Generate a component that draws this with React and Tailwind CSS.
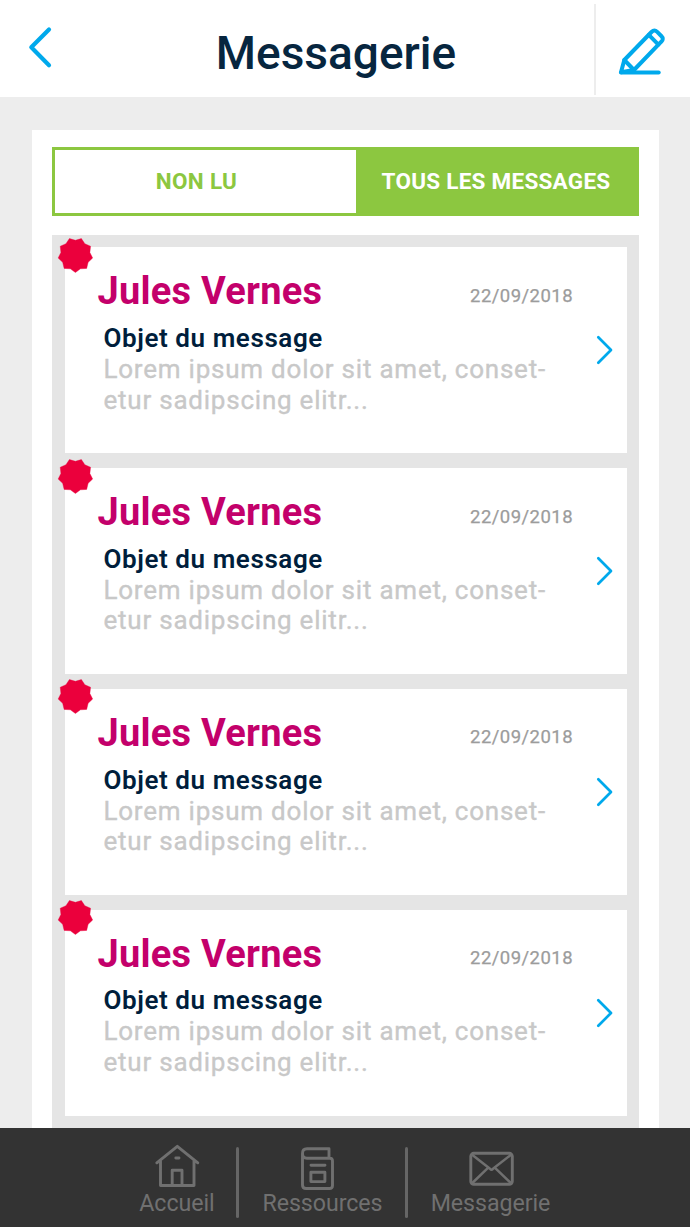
const messages = [1, 2, 3, 4].map((id) => ({
  id,
  sender: "Jules Vernes",
  date: "22/09/2018",
  subject: "Objet du message",
  lines: ["Lorem ipsum dolor sit amet, conset-", "etur sadipscing elitr..."],
}));

function Badge() {
  const points = Array.from({ length: 18 }, (_, i) => {
    const r = i % 2 === 0 ? 17.5 : 14.7;
    const a = Math.PI / 2 + (i * Math.PI) / 9;
    return `${(18.4 + r * Math.cos(a)).toFixed(2)},${(18 + r * Math.sin(a)).toFixed(2)}`;
  }).join(" ");
  return (
    <svg className="absolute -left-[7.5px] -top-[10.6px] size-9" viewBox="0 0 36 36">
      <polygon points={points} fill="#eb003c" stroke="#eb003c" strokeWidth="0.4" strokeLinejoin="round" />
    </svg>
  );
}

function MessageCard({ message }) {
  return (
    <article className="relative flex h-[206px] shrink-0 bg-white pl-[33px]">
      <Badge />
      <div className="flex-1 pt-[22px]">
        <div className="flex items-start justify-between">
          <h2 className="text-[38px] font-bold leading-[44px] tracking-[0.25px] text-[#c3006b]">{message.sender}</h2>
          <time className="mr-[20.5px] pt-[14.5px] text-[18.5px] leading-[24px] tracking-[0.45px] text-[#9c9c9c] [-webkit-text-stroke:0.25px]">{message.date}</time>
        </div>
        <h3 className="ml-[6px] mt-[9.9px] text-[26px] font-semibold leading-[30px] tracking-[0.58px] text-[#001e3c]">{message.subject}</h3>
        <p className="ml-[6px] mt-px whitespace-nowrap text-[26px] leading-[30.4px] tracking-[0.77px] text-[#c8c8c8] [-webkit-text-stroke:0.35px]">
          {message.lines[0]}
          <br />
          {message.lines[1]}
        </p>
      </div>
      <svg className="mr-[13px] mt-[88px] h-[30px] w-[20px]" viewBox="0 0 20 30" fill="none" stroke="#00a9ec" strokeWidth="2.7" strokeLinecap="round" strokeLinejoin="round">
        <path d="M4.3 2.2 17 15 4.3 27.8" />
      </svg>
    </article>
  );
}

function NavItem({ label, className, children }) {
  return (
    <a className={`flex flex-col items-center ${className}`}>
      {children}
      <span className="text-[23.2px] leading-[28px] tracking-[-0.05px]">{label}</span>
    </a>
  );
}

const iconProps = { fill: "none", stroke: "currentColor", strokeWidth: 2.9, strokeLinecap: "round", strokeLinejoin: "round" };

export default function App() {
  return (
    <div className="flex h-[1227px] w-[690px] flex-col overflow-hidden bg-[#ededed] font-[Roboto,sans-serif]">
      <header className="flex h-[97px] shrink-0 bg-white">
        <svg className="ml-[26px] mt-[24px] h-[46px] w-[28px]" viewBox="0 0 28 46" fill="none" stroke="#00a9ec" strokeWidth="4.2" strokeLinecap="round" strokeLinejoin="round">
          <path d="M23 5.400 5.300 23.300 23 41.200" />
        </svg>
        <h1 className="ml-[24px] flex-1 pt-[26px] text-center text-[46px] font-medium leading-[54px] text-[#07263f]">Messagerie</h1>
        <div className="mt-[4px] h-[91px] w-[2px] bg-[#ededed]" />
        <svg className="ml-[19px] mr-[20px] mt-[24px] h-[54px] w-[55px]" viewBox="0 0 55 54" fill="none" stroke="#00a9ec" strokeWidth="4" strokeLinecap="round" strokeLinejoin="round">
          <path d="M6 48.500H43.700" />
          <path d="M6 48.200 9.300 36 36.500 8Q39.400 5.100 42.200 7.900L46.300 12Q49.200 14.900 46.300 17.700L19 46Z" />
          <path d="M9.300 36 19 46M33.800 10.900 43.400 20.600" />
        </svg>
      </header>

      <main className="ml-[32px] mr-[31px] mt-[33px] flex flex-1 flex-col overflow-hidden bg-white px-[20px] pt-[17px]">
        <div className="flex h-[69px] shrink-0 border-3 border-[#8cc740] text-[22.500px] font-bold leading-[26px]">
          <button className="w-[301px] pb-[2px] pr-[18px] text-center tracking-[0.3px] text-[#8cc740]">NON LU</button>
          <button className="flex-1 bg-[#8cc740] pb-[2px] text-center tracking-[0.25px] text-white">TOUS LES MESSAGES</button>
        </div>
        <section className="mt-[18.500px] flex flex-1 flex-col gap-[14.700px] bg-[#e5e5e5] px-[12.500px] pt-[12.950px]">
          {messages.map((m) => (
            <MessageCard key={m.id} message={m} />
          ))}
        </section>
      </main>

      <nav className="flex h-[99px] shrink-0 bg-[#333333] pl-[117px] text-[#707070]">
        <NavItem label="Accueil" className="w-[120px]">
          <svg className="mt-[14px] h-[47px] w-[48px]" viewBox="0 0 48 47" {...iconProps}>
            <path d="M3.800 20.800 24.300 4.300 44.800 20.800M7.500 19V43.500H41V19M19.200 43V28.300H29V43M22.800 16H26" />
          </svg>
        </NavItem>
        <div className="-ml-px mt-[19px] h-[71px] w-[3px] rounded-full bg-[#666666]" />
        <NavItem label="Ressources" className="w-[167px]">
          <svg className="mr-[11px] mt-[14px] h-[47px] w-[40px] overflow-visible" viewBox="0 0 40 47" {...iconProps}>
            <path d="M32 16V6.800H10Q5.500 6.800 5.500 11.500V43Q5.500 46.500 9 46.500H32.500Q35.500 46.500 35.500 43.500V19Q35.500 16.200 32.800 16.200H10Q5.500 16.200 5.500 11.500M14 23.300H28M13.900 30.200H27.900V39.600H13.900Z" />
          </svg>
        </NavItem>
        <div className="-ml-px mt-[19px] h-[71px] w-[3px] rounded-full bg-[#666666]" />
        <NavItem label="Messagerie" className="w-[165px]">
          <svg className="mt-[14px] h-[47px] w-[48px]" viewBox="0 0 48 47" {...iconProps}>
            <rect x="3.800" y="11.300" width="41.500" height="31" rx="3" />
            <path d="M4.800 12.500 23 26.800Q24.500 28.300 26 26.800L44.300 12.500M4.800 41.500 21 25.800M44.300 41.500 28 25.800" strokeWidth="2.500" />
          </svg>
        </NavItem>
      </nav>
    </div>
  );
}
